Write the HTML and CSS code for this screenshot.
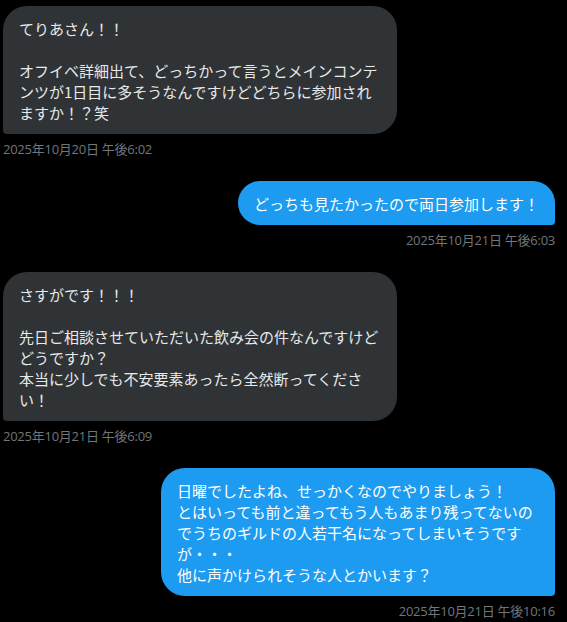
FILE: index.html
```html
<!DOCTYPE html>
<html lang="ja">
<head>
<meta charset="utf-8">
<title>DM</title>
<link rel="stylesheet" href="styles.css">
</head>
<body>
<div class="chat">
  <div class="msg msg-in">
    <div class="bubble">てりあさん！！<br><br>オフイベ詳細出て、どっちかって言うとメインコンテンツが1日目に多そうなんですけどどちらに参加されますか！？笑</div>
    <div class="time">2025年10月20日 午後6:02</div>
  </div>
  <div class="msg msg-out">
    <div class="bubble">どっちも見たかったので両日参加します！</div>
    <div class="time">2025年10月21日 午後6:03</div>
  </div>
  <div class="msg msg-in">
    <div class="bubble">さすがです！！！<br><br>先日ご相談させていただいた飲み会の件なんですけどどうですか？<br>本当に少しでも不安要素あったら全然断ってください！</div>
    <div class="time">2025年10月21日 午後6:09</div>
  </div>
  <div class="msg msg-out">
    <div class="bubble">日曜でしたよね、せっかくなのでやりましょう！<br>とはいっても前と違ってもう人もあまり残ってないのでうちのギルドの人若干名になってしまいそうですが・・・<br>他に声かけられそうな人とかいます？</div>
    <div class="time">2025年10月21日 午後10:16</div>
  </div>
</div>
</body>
</html>
```

FILE: styles.css
```css
html, body {
  margin: 0;
  padding: 0;
  background: #000;
}

body {
  font-family: "Noto Sans CJK JP", "Noto Sans", sans-serif;
}

.chat {
  display: flex;
  flex-direction: column;
  gap: 24px;
  padding: 6px 12px 0 3px;
}

.msg {
  display: flex;
  flex-direction: column;
}

.msg-in {
  align-items: flex-start;
}

.msg-out {
  align-items: flex-end;
}

.bubble {
  box-sizing: border-box;
  max-width: 394px;
  padding: 12px 16px 11px;
  font-size: 15px;
  line-height: 21px;
  border-radius: 24px;
  word-break: break-all;
}

.msg-in .bubble {
  background: #2f3336;
  color: #e7e9ea;
  border-bottom-left-radius: 4px;
}

.msg-out .bubble {
  background: #1d9bf0;
  color: #fff;
  border-bottom-right-radius: 4px;
}

.time {
  margin-top: 7px;
  font-family: "Open Sans", "Noto Sans CJK JP", sans-serif;
  font-size: 13px;
  line-height: 16px;
  letter-spacing: -0.25px;
  color: #71767b;
}
```
